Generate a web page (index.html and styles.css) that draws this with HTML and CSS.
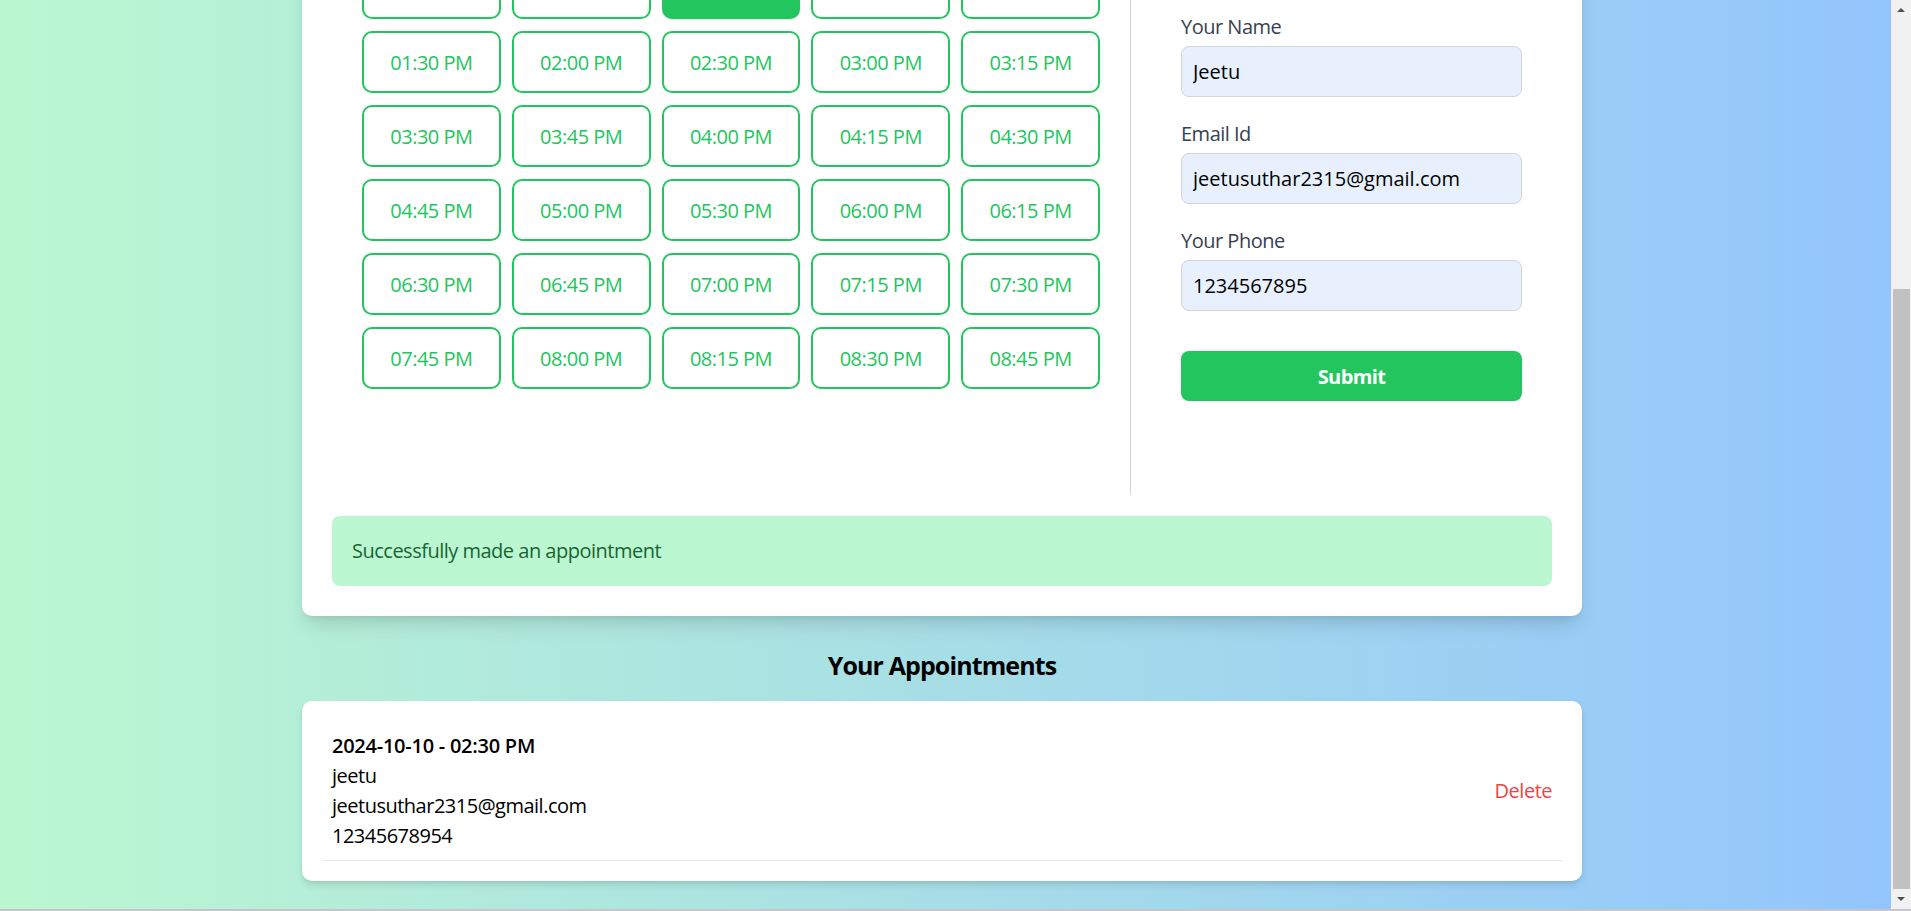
FILE: index.html
```html
<!DOCTYPE html>
<html lang="en">
<head>
<meta charset="utf-8">
<title>Book an Appointment</title>
<link rel="stylesheet" href="styles.css">
</head>
<body>
<div class="screen">
  <div class="scroller">
    <div class="page">
      <div class="container">
        <h1 class="page-title">Book an Appointment</h1>

        <section class="card booking">
          <div class="booking-body">
            <div class="slots-col">
              <h3 class="col-title">Select a Date</h3>
              <input class="date-input" type="text" value="2024-10-10">
              <h3 class="col-title">Available Slots</h3>
              <div class="slot-grid">
                <button class="slot">10:00 AM</button>
                <button class="slot">10:30 AM</button>
                <button class="slot">11:00 AM</button>
                <button class="slot">11:30 AM</button>
                <button class="slot">12:00 PM</button>
                <button class="slot">12:15 PM</button>
                <button class="slot">12:30 PM</button>
                <button class="slot selected">12:45 PM</button>
                <button class="slot">01:00 PM</button>
                <button class="slot">01:15 PM</button>
                <button class="slot">01:30 PM</button>
                <button class="slot">02:00 PM</button>
                <button class="slot">02:30 PM</button>
                <button class="slot">03:00 PM</button>
                <button class="slot">03:15 PM</button>
                <button class="slot">03:30 PM</button>
                <button class="slot">03:45 PM</button>
                <button class="slot">04:00 PM</button>
                <button class="slot">04:15 PM</button>
                <button class="slot">04:30 PM</button>
                <button class="slot">04:45 PM</button>
                <button class="slot">05:00 PM</button>
                <button class="slot">05:30 PM</button>
                <button class="slot">06:00 PM</button>
                <button class="slot">06:15 PM</button>
                <button class="slot">06:30 PM</button>
                <button class="slot">06:45 PM</button>
                <button class="slot">07:00 PM</button>
                <button class="slot">07:15 PM</button>
                <button class="slot">07:30 PM</button>
                <button class="slot">07:45 PM</button>
                <button class="slot">08:00 PM</button>
                <button class="slot">08:15 PM</button>
                <button class="slot">08:30 PM</button>
                <button class="slot">08:45 PM</button>
              </div>
            </div>

            <form class="details">
              <div class="field">
                <label class="field-label">Your Name</label>
                <input class="field-input" type="text" value="Jeetu">
              </div>
              <div class="field">
                <label class="field-label">Email Id</label>
                <input class="field-input" type="text" value="jeetusuthar2315@gmail.com">
              </div>
              <div class="field">
                <label class="field-label">Your Phone</label>
                <input class="field-input" type="text" value="1234567895">
              </div>
              <button class="submit" type="button">Submit</button>
            </form>
          </div>

          <div class="alert">Successfully made an appointment</div>
        </section>

        <h2 class="appt-title">Your Appointments</h2>

        <section class="card appt-list">
          <div class="appt-item">
            <div class="appt-info">
              <div class="appt-when">2024-10-10 - 02:30 PM</div>
              <div>jeetu</div>
              <div>jeetusuthar2315@gmail.com</div>
              <div>12345678954</div>
            </div>
            <button class="delete" type="button">Delete</button>
          </div>
        </section>
      </div>
    </div>
  </div>

  <div class="scrollbar" aria-hidden="true">
    <div class="sb-btn">
      <svg width="20" height="20" viewBox="0 0 20 20"><path d="M6 12h8l-4-4z" fill="#505050"/></svg>
    </div>
    <div class="sb-track">
      <div class="sb-thumb"></div>
    </div>
    <div class="sb-btn">
      <svg width="20" height="20" viewBox="0 0 20 20"><path d="M6 8h8l-4 4z" fill="#505050"/></svg>
    </div>
  </div>
</div>
</body>
</html>
```

FILE: styles.css
```css
* {
  box-sizing: border-box;
}

html,
body {
  margin: 0;
  padding: 0;
  height: 100%;
  overflow: hidden;
}

body {
  font-family: "Open Sans", "Noto Sans", "Liberation Sans", sans-serif;
  font-size: 20px;
  line-height: 30px;
  letter-spacing: -0.5px;
  color: #000;
}

.screen {
  display: flex;
  height: 100vh;
  border-bottom: 2px solid #c7c4cc;
}

.scroller {
  flex: 1;
  min-width: 0;
  height: 100%;
  overflow: hidden;
  display: flex;
  flex-direction: column-reverse;
  background: linear-gradient(to right, #bbf7d0, #93c5fd);
}

/* classic window scrollbar */
.scrollbar {
  width: 20px;
  flex: none;
  display: flex;
  flex-direction: column;
  background: #f1f1f1;
}

.sb-btn {
  height: 20px;
  flex: none;
  display: flex;
}

.sb-track {
  flex: 1;
  padding: 269px 1px 0 2px;
  display: flex;
  flex-direction: column;
}

.sb-thumb {
  flex: 1;
  background: #c1c1c1;
}

.page {
  flex: none;
  padding: 30px 7px 28px 0;
}

.container {
  width: 1280px;
  margin: 0 auto;
}

.page-title {
  margin: 0 0 20px;
  font-size: 30px;
  line-height: 38px;
  text-align: center;
  font-weight: 700;
}

.card {
  background: #fff;
  border-radius: 10px;
}

.booking {
  padding: 30px;
  box-shadow: 0 12px 19px -4px rgba(0, 0, 0, 0.13), 0 5px 8px -5px rgba(0, 0, 0, 0.1);
}

.booking-body {
  display: flex;
}

.slots-col {
  width: 798px;
  padding: 28px 30px 106px;
}

.col-title {
  margin: 0 0 5px;
  font-size: 20px;
  line-height: 30px;
  font-weight: 600;
  color: #374151;
}

.date-input {
  display: block;
  width: 300px;
  height: 50px;
  margin-bottom: 20px;
  padding: 0 11px;
  border: 1px solid #d1d5db;
  border-radius: 8px;
  font: inherit;
}

.slots-col .col-title + .slot-grid {
  margin-top: 5px;
}

.slot-grid {
  display: grid;
  grid-template-columns: repeat(5, 1fr);
  column-gap: 11px;
  row-gap: 12px;
}

.slot {
  height: 62px;
  border: 2px solid #22c55e;
  border-radius: 10px;
  background: #fff;
  color: #22c55e;
  font-family: inherit;
  font-size: 20px;
  letter-spacing: -0.5px;
  padding: 0;
}

.slot.selected {
  background: #22c55e;
  color: #fff;
  box-shadow: 0 1px 2px rgba(0, 0, 0, 0.12);
}

.details {
  flex: 1;
  margin: 0;
  padding: 297px 30px 0 50px;
  border-left: 1px solid #d1d5db;
}

.field {
  margin-bottom: 22px;
}

.field-label {
  display: block;
  margin-bottom: 4px;
  color: #374151;
}

.field-input {
  display: block;
  width: 341px;
  height: 51px;
  padding: 0 11px;
  border: 1px solid #d1d5db;
  border-radius: 8px;
  background: #e8f0fe;
  font: inherit;
  color: #000;
}

.submit {
  display: block;
  width: 341px;
  height: 50px;
  margin-top: 40px;
  border: 0;
  border-radius: 8px;
  background: #22c55e;
  color: #fff;
  font-family: inherit;
  font-size: 20px;
  font-weight: 700;
  letter-spacing: -0.6px;
}

.alert {
  margin-top: 21px;
  padding: 20px;
  border-radius: 8px;
  background: #bbf7d0;
  color: #166534;
}

.appt-title {
  margin: 30px 0 17px;
  font-size: 25px;
  line-height: 38px;
  font-weight: 700;
  letter-spacing: -0.9px;
  text-align: center;
}

.appt-list {
  padding: 20px;
  box-shadow: 0 5px 8px -1px rgba(0, 0, 0, 0.1), 0 2px 5px -2px rgba(0, 0, 0, 0.1);
}

.appt-item {
  display: flex;
  align-items: center;
  justify-content: space-between;
  padding: 10px 10px 9px;
  border-bottom: 1px solid #e5e7eb;
}

.appt-when {
  font-weight: 600;
  letter-spacing: -0.25px;
}

.delete {
  padding: 0;
  border: 0;
  background: none;
  color: #ef4444;
  font-family: inherit;
  font-size: 20px;
  line-height: 30px;
  letter-spacing: -0.5px;
}
```
